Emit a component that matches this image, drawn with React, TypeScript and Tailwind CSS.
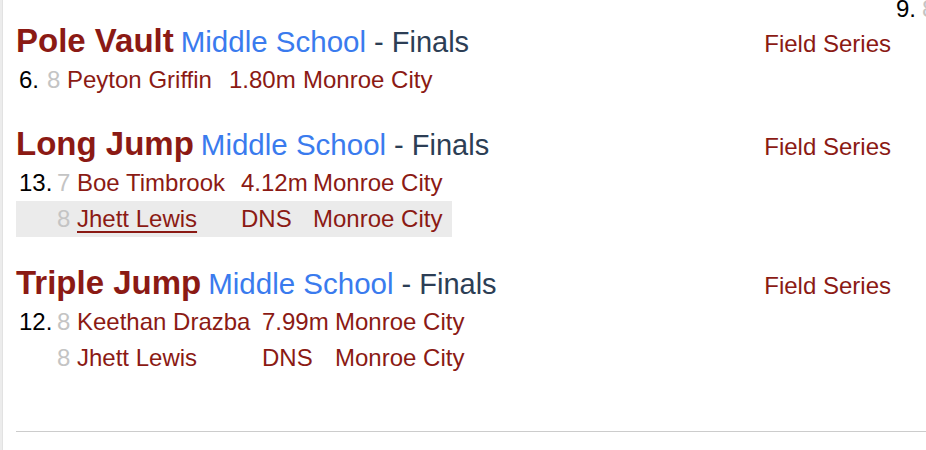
import React from "react";

type Row = { place: string; grade: string; name: string; mark: string; team: string; hover?: boolean };
type Event = { title: string; cols: string; rows: Row[] };

const events: Event[] = [
  {
    title: "Pole Vault",
    cols: "grid-cols-[28px_20px_162px_74px_auto]",
    rows: [{ place: "6.", grade: "8", name: "Peyton Griffin", mark: "1.80m", team: "Monroe City" }],
  },
  {
    title: "Long Jump",
    cols: "grid-cols-[38px_20px_164px_72px_auto]",
    rows: [
      { place: "13.", grade: "7", name: "Boe Timbrook", mark: "4.12m", team: "Monroe City" },
      { place: "", grade: "8", name: "Jhett Lewis", mark: "DNS", team: "Monroe City", hover: true },
    ],
  },
  {
    title: "Triple Jump",
    cols: "grid-cols-[38px_20px_185px_73px_auto]",
    rows: [
      { place: "12.", grade: "8", name: "Keethan Drazba", mark: "7.99m", team: "Monroe City" },
      { place: "", grade: "8", name: "Jhett Lewis", mark: "DNS", team: "Monroe City" },
    ],
  },
];

const font = { fontFamily: "'Liberation Sans', Arial, sans-serif" };

function ResultRow({ r, cols }: { r: Row; cols: string }) {
  return (
    <div
      className={`grid ${cols} w-max h-[36px] leading-[36px] text-[24px] pl-[3px] pr-[10px] whitespace-nowrap ${
        r.hover ? "bg-[#ebebeb]" : ""
      }`}
    >
      <span className="text-black">{r.place}</span>
      <span className="text-[#c4c4c4]">{r.grade}</span>
      <span className={`text-[#8b1a14] ${r.hover ? "underline decoration-[1.5px] underline-offset-[4px]" : ""}`}>
        {r.name}
      </span>
      <span className="text-[#8b1a14]">{r.mark}</span>
      <span className="text-[#8b1a14]">{r.team}</span>
    </div>
  );
}

export default function App() {
  return (
    <div className="flex w-[926px] h-[450px] overflow-hidden bg-white" style={font}>
      <div className="w-[3px] shrink-0 bg-[#ececec] border-r border-[#e2e2e2]" />
      <div className="flex-1 min-w-0 flex flex-col">
        <div className="flex">
          <div className="w-[875px] shrink-0 ml-[13px] pt-[21px] flex flex-col gap-[26px]">
            {events.map((e) => (
              <section key={e.title}>
                <div className="flex items-baseline justify-between h-[41px] leading-[40px] whitespace-nowrap">
                  <div className="flex items-baseline">
                    <span className="text-[33px] font-bold text-[#8b1a14]">{e.title}</span>
                    <span className="text-[29.5px] text-[#3a7bee] ml-[7px]">Middle School</span>
                    <span className="text-[29px] text-[#2c3e55] ml-[8px]">- Finals</span>
                  </div>
                  <span className="text-[24px] text-[#8b1a14]">Field Series</span>
                </div>
                {e.rows.map((r, i) => (
                  <ResultRow key={i} r={r} cols={e.cols} />
                ))}
              </section>
            ))}
          </div>
          <div className="shrink-0 ml-[2px] -mt-[9px] whitespace-nowrap">
            <div className="grid grid-cols-[26px_20px_auto] h-[36px] leading-[36px] text-[24px] pl-[3px]">
              <span className="text-black">9.</span>
              <span className="text-[#c4c4c4]">8</span>
              <span className="text-[#8b1a14]">Name</span>
            </div>
          </div>
        </div>
        <div className="mt-[55px] ml-[13px] border-t border-[#cccccc]" />
      </div>
    </div>
  );
}
